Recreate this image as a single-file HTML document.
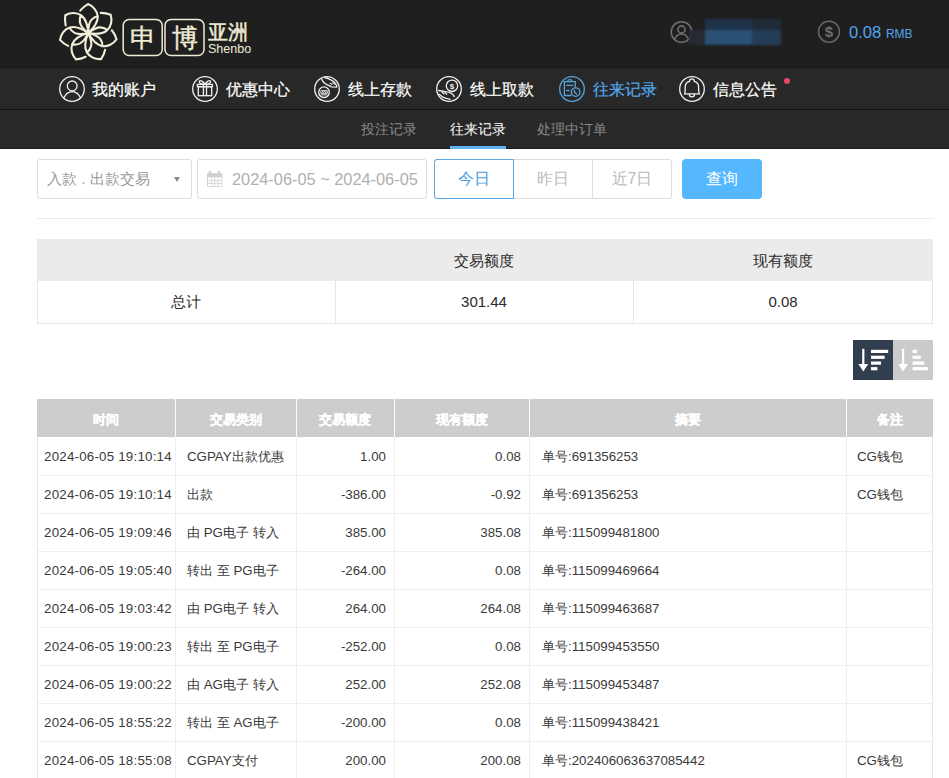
<!DOCTYPE html>
<html><head><meta charset="utf-8">
<style>
*{margin:0;padding:0;box-sizing:border-box}
html,body{width:949px;height:778px;overflow:hidden;background:#fff;font-family:"Liberation Sans",sans-serif;color:#333}
.abs{position:absolute}
#top{position:absolute;left:0;top:0;width:949px;height:68px;background:#1f1f1f}
#nav{position:absolute;left:0;top:68px;width:949px;height:41px;background:#282828;border-top:1px solid #232323}
#topline{position:absolute;left:0;top:67px;width:949px;height:1px;background:#1c1c1c}
#navline{position:absolute;left:0;top:109px;width:949px;height:1px;background:#141414}
#sub{position:absolute;left:0;top:110px;width:949px;height:38px;background:#282828}
#subline{position:absolute;left:0;top:148px;width:949px;height:1px;background:#1a1a1a}
.nt{position:absolute;top:79.5px;font-size:16px;line-height:20px;color:#fff;white-space:nowrap;-webkit-text-stroke:0.2px currentColor}
.ni{position:absolute;top:75.6px;width:26px;height:26px}
.st{position:absolute;top:119px;font-size:14px;line-height:20px;color:#8a8a8a;white-space:nowrap}
.box{position:absolute;border:1px solid #dcdcdc;border-radius:3px;background:#fff}
.logoc{font-size:25.5px;line-height:38px;text-align:center;color:#efecd6;-webkit-text-stroke:0.35px #efecd6}
.seg{top:159px;height:40px;line-height:40px;text-align:center;font-size:16px}
.sumt{font-size:15px;line-height:20px;text-align:center;color:#2a2a2a}
.th{height:38px;line-height:41px;text-align:center;color:#fff;font-weight:bold;font-size:13px;-webkit-text-stroke:0.3px #fff}
.td{height:38px;line-height:39px;font-size:13.3px;color:#3a3a3a;white-space:nowrap}
</style></head><body>
<div id="top"></div><div id="topline"></div>
<div id="nav"></div><div id="navline"></div>
<div id="sub"></div><div id="subline"></div>
<svg class="abs" style="left:0;top:0" width="260" height="68" viewBox="0 0 260 68"><g transform="translate(88.2 33.1)" fill="none" stroke="#f0eed8" stroke-width="2.1" stroke-linecap="round"><path transform="rotate(0.000)" d="M0 0 C4 -3.5 9.6 -9 9.6 -16.5 C9.3 -22 5 -27 -0.3 -29 C-3 -27.5 -6 -25 -8 -22.4 M0 0 C0 -5 0.5 -10 3.2 -13.2 C5 -15.2 7.2 -16.6 9.6 -16.9"/><path transform="rotate(51.429)" d="M0 0 C4 -3.5 9.6 -9 9.6 -16.5 C9.3 -22 5 -27 -0.3 -29 C-3 -27.5 -6 -25 -8 -22.4 M0 0 C0 -5 0.5 -10 3.2 -13.2 C5 -15.2 7.2 -16.6 9.6 -16.9"/><path transform="rotate(102.857)" d="M0 0 C4 -3.5 9.6 -9 9.6 -16.5 C9.3 -22 5 -27 -0.3 -29 C-3 -27.5 -6 -25 -8 -22.4 M0 0 C0 -5 0.5 -10 3.2 -13.2 C5 -15.2 7.2 -16.6 9.6 -16.9"/><path transform="rotate(154.286)" d="M0 0 C4 -3.5 9.6 -9 9.6 -16.5 C9.3 -22 5 -27 -0.3 -29 C-3 -27.5 -6 -25 -8 -22.4 M0 0 C0 -5 0.5 -10 3.2 -13.2 C5 -15.2 7.2 -16.6 9.6 -16.9"/><path transform="rotate(205.714)" d="M0 0 C4 -3.5 9.6 -9 9.6 -16.5 C9.3 -22 5 -27 -0.3 -29 C-3 -27.5 -6 -25 -8 -22.4 M0 0 C0 -5 0.5 -10 3.2 -13.2 C5 -15.2 7.2 -16.6 9.6 -16.9"/><path transform="rotate(257.143)" d="M0 0 C4 -3.5 9.6 -9 9.6 -16.5 C9.3 -22 5 -27 -0.3 -29 C-3 -27.5 -6 -25 -8 -22.4 M0 0 C0 -5 0.5 -10 3.2 -13.2 C5 -15.2 7.2 -16.6 9.6 -16.9"/><path transform="rotate(308.571)" d="M0 0 C4 -3.5 9.6 -9 9.6 -16.5 C9.3 -22 5 -27 -0.3 -29 C-3 -27.5 -6 -25 -8 -22.4 M0 0 C0 -5 0.5 -10 3.2 -13.2 C5 -15.2 7.2 -16.6 9.6 -16.9"/></g><rect x="123.2" y="19.5" width="39" height="36" rx="6" fill="none" stroke="#efecd6" stroke-width="1.5"/><rect x="165" y="19.5" width="39" height="36" rx="6" fill="none" stroke="#efecd6" stroke-width="1.5"/></svg>
<div class="abs logoc" style="left:123px;top:19px;width:39px">申</div>
<div class="abs logoc" style="left:165px;top:19px;width:39px">博</div>
<div class="abs" style="left:208px;top:19.5px;font-size:19.5px;line-height:24px;color:#efecd6;-webkit-text-stroke:0.5px #efecd6;letter-spacing:0px">亚洲</div>
<div class="abs" style="left:208px;top:42px;font-size:12.5px;line-height:14px;color:#efecd6">Shenbo</div>
<svg class="abs" style="left:668px;top:19px" width="28" height="28" viewBox="0 0 28 28"><g fill="none" stroke="#707070" stroke-width="1.6"><circle cx="13.5" cy="13" r="10.3"/><circle cx="13.5" cy="10.5" r="3.6"/><path d="M6.5 20.5 C8 16.5 10.5 15 13.5 15 C16.5 15 19 16.5 20.5 20.5"/></g></svg>
<div class="abs" style="left:685px;top:15px;width:100px;height:36px;filter:blur(1.2px)"><div class="abs" style="left:4px;top:15px;width:16px;height:15px;background:#262b33"></div><div class="abs" style="left:20px;top:4px;width:47px;height:11px;background:#1e334a"></div><div class="abs" style="left:20px;top:15px;width:47px;height:15px;background:#2a5073"></div><div class="abs" style="left:67px;top:4px;width:29px;height:11px;background:#202b38"></div><div class="abs" style="left:67px;top:15px;width:29px;height:15px;background:#243d56"></div></div>
<svg class="abs" style="left:816px;top:19px" width="26" height="26" viewBox="0 0 26 26"><circle cx="13" cy="12.7" r="10.5" fill="none" stroke="#666" stroke-width="1.5"/><text x="13" y="18.3" text-anchor="middle" font-family="Liberation Sans" font-size="15" font-weight="bold" fill="#6e6e6e">$</text></svg>
<div class="abs" style="left:849px;top:22.5px;font-size:16.6px;line-height:20px;color:#4ea6ee;white-space:nowrap">0.08 <span style="font-size:12px">RMB</span></div>
<svg class="ni" style="left:59px" viewBox="0 0 26 26" width="26" height="26"><g fill="none" stroke="#f0f0f0" stroke-width="1.3"><circle cx="13" cy="13" r="12.3"/><circle cx="13.2" cy="9.9" r="4.9"/><path d="M4.6 22.6 C6.5 17.8 9.5 15.6 13.2 15.6 C16.9 15.6 19.9 17.8 21.8 22.6"/></g></svg>
<div class="nt" style="left:92px;color:#ffffff">我的账户</div>
<svg class="ni" style="left:192px" viewBox="0 0 26 26" width="26" height="26"><g fill="none" stroke="#f0f0f0" stroke-width="1.3"><circle cx="13" cy="13" r="12.3"/><rect x="5.4" y="8.4" width="15" height="2.3"/><rect x="6.3" y="10.7" width="13.4" height="9"/><path d="M11.4 8.4 V19.7 M14.5 8.4 V19.7 M12.9 8.3 C11.2 5 8.2 3.9 7.3 5.4 C6.8 7.2 9.3 8.3 12.9 8.3 M12.9 8.3 C14.6 5 17.6 3.9 18.5 5.4 C19 7.2 16.5 8.3 12.9 8.3"/></g></svg>
<div class="nt" style="left:226px;color:#ffffff">优惠中心</div>
<svg class="ni" style="left:314px" viewBox="0 0 26 26" width="26" height="26"><g fill="none" stroke="#f0f0f0" stroke-width="1.3"><circle cx="13" cy="13" r="12.3"/><path d="M7.7 2.3 C8.3 5.5 9.8 7.3 13.5 8.9 C15 9.6 16.5 10.3 17.4 10.9 L23.1 11.2 M10.4 1.5 C12.5 2 14 2.4 15.4 3.1 C17.5 4 19.2 5 20.2 6 C21.5 7.4 22.6 9 23.1 11.2 "/><path stroke-width="1.1" d="M15.8 7.2 L18.3 8.6 M18.3 6.4 L21 8.4"/><circle cx="10" cy="16.2" r="5.3"/><g stroke-width="0.9"><rect x="6.8" y="14.6" width="6.6" height="3.1" rx="0.5"/><path d="M7.9 17.3 L8.9 15 M9.6 17.3 L10.6 15 M11.3 17.3 L12.3 15 M6.8 18.9 H13.4"/></g></g></svg>
<div class="nt" style="left:348px;color:#ffffff">线上存款</div>
<svg class="ni" style="left:436px" viewBox="0 0 26 26" width="26" height="26"><g fill="none" stroke="#f0f0f0" stroke-width="1.3"><circle cx="13" cy="13" r="12.3"/><circle cx="16" cy="9.8" r="5.7"/><path d="M2.1 14.5 C4.5 14.8 6 15 7.5 15.2 C10 15.6 12 15.9 13.3 16.4 C15 17 16.5 17.9 17.4 19.2 C17.9 19.9 18.2 20.4 18.4 21 M2.9 17.9 C4.5 19.3 6 20.6 7.5 21.4 C9 22.1 10.3 22.5 11.4 22.6 C12.5 22.8 13.6 23 14.6 23.4 M5.6 15.5 L8.3 18.2 M8.6 15.8 L11 18.6"/><text x="16" y="12.6" text-anchor="middle" font-size="8" font-weight="bold" font-family="Liberation Sans" stroke="none" fill="#f0f0f0">$</text></g></svg>
<div class="nt" style="left:470px;color:#ffffff">线上取款</div>
<svg class="ni" style="left:559px" viewBox="0 0 26 26" width="26" height="26"><g fill="none" stroke="#5aa3dc" stroke-width="1.3"><circle cx="13" cy="13" r="12.3"/><path d="M12.5 19.5 H5.4 V5.6 H16.2 V11.5 M7.3 9.4 H14.3 M7.3 14.5 H10.4 M8.9 5.6 V4.6 C8.9 3.2 12.7 3.2 12.7 4.6 V5.6"/><circle cx="16.6" cy="16.1" r="4.3"/><path d="M15.2 13.8 L15.6 16.2 L18 18.4"/></g></svg>
<div class="nt" style="left:593px;color:#52a8ee">往来记录</div>
<svg class="ni" style="left:679px" viewBox="0 0 26 26" width="26" height="26"><g fill="none" stroke="#f0f0f0" stroke-width="1.3"><circle cx="13" cy="13" r="12.3"/><path d="M5.6 17.9 L20.4 17.9 C19.6 16.5 19.6 14 19.6 11 C19.6 8 17.6 6 15.3 5.4 C15.3 3.6 14.4 2.9 12.9 2.9 C11.4 2.9 10.5 3.6 10.5 5.4 C8.2 6 6.2 8 6.2 11 C6.2 14 6.2 16.5 5.6 17.9 Z M10.3 18.3 C10.3 21.7 15.5 21.7 15.5 18.3"/></g></svg>
<div class="nt" style="left:713px;color:#ffffff">信息公告</div>
<div class="abs" style="left:784px;top:78px;width:6px;height:6px;border-radius:50%;background:#e5486a"></div>
<div class="st" style="left:361px">投注记录</div>
<div class="st" style="left:450px;color:#fff">往来记录</div>
<div class="st" style="left:537px">处理中订单</div>
<div class="abs" style="left:450px;top:146px;width:56px;height:3px;background:#5ab3f2"></div>
<div class="box" style="left:37px;top:159px;width:155px;height:40px"></div>
<div class="abs" style="left:47px;top:169px;font-size:15px;line-height:20px;color:#999;white-space:nowrap">入款 . 出款交易</div>
<div class="abs" style="left:174px;top:177px;width:0;height:0;border-left:3.7px solid transparent;border-right:3.7px solid transparent;border-top:5.5px solid #8a8a8a"></div>
<div class="box" style="left:197px;top:159px;width:230px;height:40px"></div>
<svg class="abs" style="left:206px;top:171px" width="17" height="17" viewBox="0 0 17 17"><rect x="1" y="2.3" width="15.4" height="13.5" rx="1" fill="#cfcfcf"/><rect x="1.9" y="6.3" width="13.6" height="8.7" fill="#fff"/><g fill="#d6d6d6"><rect x="1.9" y="9.2" width="13.6" height="0.9"/><rect x="1.9" y="12" width="13.6" height="0.9"/><rect x="5.1" y="6.3" width="0.9" height="8.7"/><rect x="8.3" y="6.3" width="0.9" height="8.7"/><rect x="11.5" y="6.3" width="0.9" height="8.7"/></g><g fill="none" stroke="#cfcfcf" stroke-width="1.1"><rect x="3" y="0.6" width="1.6" height="3.6" rx="0.8"/><rect x="12" y="0.6" width="1.6" height="3.6" rx="0.8"/></g></svg>
<div class="abs" style="left:232px;top:169px;font-size:16.35px;line-height:20px;color:#b0b0b0;white-space:nowrap">2024-06-05 ~ 2024-06-05</div>
<div class="box" style="left:434px;top:159px;width:238px;height:40px;border-radius:3px"></div>
<div class="abs" style="left:513px;top:160px;width:1px;height:38px;background:#dcdcdc"></div>
<div class="abs" style="left:592px;top:160px;width:1px;height:38px;background:#dcdcdc"></div>
<div class="abs" style="left:434px;top:159px;width:80px;height:40px;border:1px solid #5aa7e6;border-radius:3px 0 0 3px"></div>
<div class="abs seg" style="left:434px;width:80px;color:#4a9de0">今日</div>
<div class="abs seg" style="left:513px;width:80px;color:#bcbcbc">昨日</div>
<div class="abs seg" style="left:592px;width:80px;color:#bcbcbc">近7日</div>
<div class="abs seg" style="left:682px;top:159px;width:80px;height:40px;border-radius:4px;background:#55b7fd;color:#fff;line-height:40px">查询</div>
<div class="abs" style="left:37px;top:218px;width:897px;height:1px;background:#ebebeb"></div>
<div class="abs" style="left:37px;top:239px;width:896px;height:85px;border:1px solid #e6e6e6;border-top:none"></div>
<div class="abs" style="left:37px;top:239px;width:896px;height:42px;background:#ebebeb"></div>
<div class="abs" style="left:335px;top:281px;width:1px;height:42px;background:#e6e6e6"></div>
<div class="abs" style="left:633px;top:281px;width:1px;height:42px;background:#e6e6e6"></div>
<div class="abs sumt" style="left:335px;top:251px;width:298px">交易额度</div>
<div class="abs sumt" style="left:633px;top:251px;width:300px">现有额度</div>
<div class="abs sumt" style="left:37px;top:292px;width:298px">总计</div>
<div class="abs sumt" style="left:335px;top:292px;width:298px">301.44</div>
<div class="abs sumt" style="left:633px;top:292px;width:300px">0.08</div>
<div class="abs" style="left:853px;top:340px;width:40px;height:40px;background:#303e50"></div>
<div class="abs" style="left:893px;top:340px;width:40px;height:40px;background:#cbcbcb"></div>
<svg class="abs" style="left:853px;top:340px" width="80" height="40" viewBox="0 0 80 40"><g fill="#fff"><rect x="9.2" y="8.8" width="2.2" height="16"/><path d="M5.4 24 L15.2 24 L10.3 31.5 Z"/><rect x="18" y="9.8" width="17.2" height="3.2"/><rect x="18" y="15.7" width="13.6" height="3.2"/><rect x="18" y="21.5" width="10" height="3.2"/><rect x="18" y="27.1" width="6.4" height="3.2"/><rect x="49" y="8.8" width="2.2" height="16"/><path d="M45.2 24 L55 24 L50.1 31.5 Z"/><rect x="59.5" y="9.8" width="4.6" height="3.2"/><rect x="59.5" y="15.7" width="8.2" height="3.2"/><rect x="59.5" y="21.5" width="11.8" height="3.2"/><rect x="59.5" y="27.1" width="15.4" height="3.2"/></g></svg>
<div class="abs" style="left:37px;top:399px;width:896px;height:38px;background:#cdcdcd"></div>
<div class="abs th" style="left:37px;top:399px;width:138px">时间</div>
<div class="abs" style="left:175px;top:399px;width:1px;height:38px;background:#fbfbfb"></div>
<div class="abs th" style="left:175px;top:399px;width:121px">交易类别</div>
<div class="abs" style="left:296px;top:399px;width:1px;height:38px;background:#fbfbfb"></div>
<div class="abs th" style="left:296px;top:399px;width:98px">交易额度</div>
<div class="abs" style="left:394px;top:399px;width:1px;height:38px;background:#fbfbfb"></div>
<div class="abs th" style="left:394px;top:399px;width:135px">现有额度</div>
<div class="abs" style="left:529px;top:399px;width:1px;height:38px;background:#fbfbfb"></div>
<div class="abs th" style="left:529px;top:399px;width:317px">摘要</div>
<div class="abs" style="left:846px;top:399px;width:1px;height:38px;background:#fbfbfb"></div>
<div class="abs th" style="left:846px;top:399px;width:87px">备注</div>
<div class="abs" style="left:37px;top:437px;width:1px;height:344px;background:#e8e8e8"></div>
<div class="abs" style="left:932px;top:437px;width:1px;height:344px;background:#e8e8e8"></div>
<div class="abs" style="left:175px;top:437px;width:1px;height:344px;background:#eeeeee"></div>
<div class="abs" style="left:296px;top:437px;width:1px;height:344px;background:#eeeeee"></div>
<div class="abs" style="left:394px;top:437px;width:1px;height:344px;background:#eeeeee"></div>
<div class="abs" style="left:529px;top:437px;width:1px;height:344px;background:#eeeeee"></div>
<div class="abs" style="left:846px;top:437px;width:1px;height:344px;background:#eeeeee"></div>
<div class="abs" style="left:37px;top:475px;width:896px;height:1px;background:#eeeeee"></div>
<div class="abs" style="left:37px;top:513px;width:896px;height:1px;background:#eeeeee"></div>
<div class="abs" style="left:37px;top:551px;width:896px;height:1px;background:#eeeeee"></div>
<div class="abs" style="left:37px;top:589px;width:896px;height:1px;background:#eeeeee"></div>
<div class="abs" style="left:37px;top:627px;width:896px;height:1px;background:#eeeeee"></div>
<div class="abs" style="left:37px;top:665px;width:896px;height:1px;background:#eeeeee"></div>
<div class="abs" style="left:37px;top:703px;width:896px;height:1px;background:#eeeeee"></div>
<div class="abs" style="left:37px;top:741px;width:896px;height:1px;background:#eeeeee"></div>
<div class="abs" style="left:37px;top:779px;width:896px;height:1px;background:#eeeeee"></div>
<div class="abs td" style="left:44px;top:437px;letter-spacing:0.23px">2024-06-05 19:10:14</div>
<div class="abs td" style="left:187px;top:437px">CGPAY出款优惠</div>
<div class="abs td" style="left:296px;top:437px;width:90px;text-align:right">1.00</div>
<div class="abs td" style="left:394px;top:437px;width:127px;text-align:right">0.08</div>
<div class="abs td" style="left:542px;top:437px">单号:691356253</div>
<div class="abs td" style="left:857px;top:437px">CG钱包</div>
<div class="abs td" style="left:44px;top:475px;letter-spacing:0.23px">2024-06-05 19:10:14</div>
<div class="abs td" style="left:187px;top:475px">出款</div>
<div class="abs td" style="left:296px;top:475px;width:90px;text-align:right">-386.00</div>
<div class="abs td" style="left:394px;top:475px;width:127px;text-align:right">-0.92</div>
<div class="abs td" style="left:542px;top:475px">单号:691356253</div>
<div class="abs td" style="left:857px;top:475px">CG钱包</div>
<div class="abs td" style="left:44px;top:513px;letter-spacing:0.23px">2024-06-05 19:09:46</div>
<div class="abs td" style="left:187px;top:513px">由 PG电子 转入</div>
<div class="abs td" style="left:296px;top:513px;width:90px;text-align:right">385.00</div>
<div class="abs td" style="left:394px;top:513px;width:127px;text-align:right">385.08</div>
<div class="abs td" style="left:542px;top:513px">单号:115099481800</div>
<div class="abs td" style="left:857px;top:513px"></div>
<div class="abs td" style="left:44px;top:551px;letter-spacing:0.23px">2024-06-05 19:05:40</div>
<div class="abs td" style="left:187px;top:551px">转出 至 PG电子</div>
<div class="abs td" style="left:296px;top:551px;width:90px;text-align:right">-264.00</div>
<div class="abs td" style="left:394px;top:551px;width:127px;text-align:right">0.08</div>
<div class="abs td" style="left:542px;top:551px">单号:115099469664</div>
<div class="abs td" style="left:857px;top:551px"></div>
<div class="abs td" style="left:44px;top:589px;letter-spacing:0.23px">2024-06-05 19:03:42</div>
<div class="abs td" style="left:187px;top:589px">由 PG电子 转入</div>
<div class="abs td" style="left:296px;top:589px;width:90px;text-align:right">264.00</div>
<div class="abs td" style="left:394px;top:589px;width:127px;text-align:right">264.08</div>
<div class="abs td" style="left:542px;top:589px">单号:115099463687</div>
<div class="abs td" style="left:857px;top:589px"></div>
<div class="abs td" style="left:44px;top:627px;letter-spacing:0.23px">2024-06-05 19:00:23</div>
<div class="abs td" style="left:187px;top:627px">转出 至 PG电子</div>
<div class="abs td" style="left:296px;top:627px;width:90px;text-align:right">-252.00</div>
<div class="abs td" style="left:394px;top:627px;width:127px;text-align:right">0.08</div>
<div class="abs td" style="left:542px;top:627px">单号:115099453550</div>
<div class="abs td" style="left:857px;top:627px"></div>
<div class="abs td" style="left:44px;top:665px;letter-spacing:0.23px">2024-06-05 19:00:22</div>
<div class="abs td" style="left:187px;top:665px">由 AG电子 转入</div>
<div class="abs td" style="left:296px;top:665px;width:90px;text-align:right">252.00</div>
<div class="abs td" style="left:394px;top:665px;width:127px;text-align:right">252.08</div>
<div class="abs td" style="left:542px;top:665px">单号:115099453487</div>
<div class="abs td" style="left:857px;top:665px"></div>
<div class="abs td" style="left:44px;top:703px;letter-spacing:0.23px">2024-06-05 18:55:22</div>
<div class="abs td" style="left:187px;top:703px">转出 至 AG电子</div>
<div class="abs td" style="left:296px;top:703px;width:90px;text-align:right">-200.00</div>
<div class="abs td" style="left:394px;top:703px;width:127px;text-align:right">0.08</div>
<div class="abs td" style="left:542px;top:703px">单号:115099438421</div>
<div class="abs td" style="left:857px;top:703px"></div>
<div class="abs td" style="left:44px;top:741px;letter-spacing:0.23px">2024-06-05 18:55:08</div>
<div class="abs td" style="left:187px;top:741px">CGPAY支付</div>
<div class="abs td" style="left:296px;top:741px;width:90px;text-align:right">200.00</div>
<div class="abs td" style="left:394px;top:741px;width:127px;text-align:right">200.08</div>
<div class="abs td" style="left:542px;top:741px">单号:202406063637085442</div>
<div class="abs td" style="left:857px;top:741px">CG钱包</div>
</body></html>
